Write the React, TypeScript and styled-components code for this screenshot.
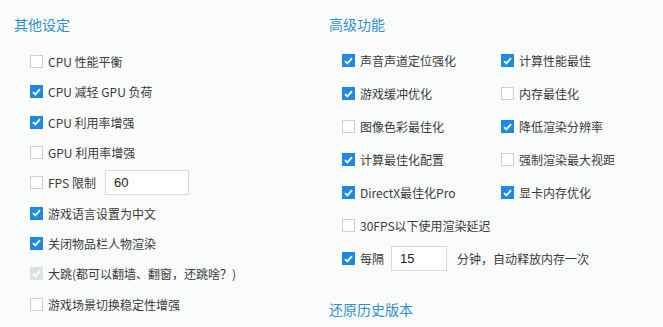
import styled, { createGlobalStyle } from "styled-components";

const GlobalStyle = createGlobalStyle`
  html, body {
    margin: 0;
    padding: 0;
    background: #fafcfc;
  }
  body {
    font-family: "Microsoft YaHei", "Noto Sans CJK SC", "Noto Sans", sans-serif;
    color: #3a3a3a;
  }
`;

const Page = styled.div`
  width: 663px;
  height: 327px;
  display: grid;
  grid-template-columns: 315px 1fr;
  padding-left: 14px;
  box-sizing: border-box;
  overflow: hidden;
`;

const Section = styled.div`
  display: flex;
  flex-direction: column;
`;

const Title = styled.div`
  margin-top: 14px;
  font-size: 14px;
  line-height: 20px;
  color: #2f8fce;
`;

const LeftList = styled.div`
  margin-top: 12.5px;
  padding-left: 16px;
  display: grid;
  grid-auto-rows: 30.3px;
`;

const RightList = styled.div`
  margin-top: 10px;
  padding-left: 13px;
  display: grid;
  grid-template-columns: 159px 1fr;
  grid-auto-rows: 33px;
`;

const Row = styled.label<{ $wide?: boolean }>`
  display: flex;
  align-items: center;
  font-size: 12px;
  white-space: nowrap;
  grid-column: ${(p) => (p.$wide ? "1 / -1" : "auto")};
`;

const Box = styled.span<{ $checked?: boolean; $disabled?: boolean }>`
  width: 13px;
  height: 13px;
  box-sizing: border-box;
  margin-right: 5px;
  flex-shrink: 0;
  display: flex;
  align-items: center;
  justify-content: center;
  border: 1px solid
    ${(p) => (p.$disabled ? "#dde1e5" : p.$checked ? "#1e88e5" : "#cfcfcf")};
  background: ${(p) =>
    p.$disabled ? "#dde1e5" : p.$checked ? "#1e88e5" : "#ffffff"};
`;

const Input = styled.div<{ $w: number }>`
  width: ${(p) => p.$w}px;
  height: 25px;
  box-sizing: border-box;
  border: 1px solid #d8d8d8;
  background: #fff;
  display: flex;
  align-items: center;
  padding-left: 8px;
  font-family: "Liberation Sans", "Noto Sans CJK SC", sans-serif;
  font-size: 13px;
  color: #222;
`;

const Link = styled.div`
  margin-top: 24px;
  font-size: 14px;
  line-height: 20px;
  color: #2f8fce;
`;

const Check = ({ checked, disabled }: { checked?: boolean; disabled?: boolean }) => (
  <Box $checked={checked} $disabled={disabled}>
    {(checked || disabled) && (
      <svg width="9" height="8" viewBox="0 0 9 8">
        <path d="M1 4.2 L3.4 6.4 L8 1.2" fill="none" stroke="#fff" strokeWidth="1.8" />
      </svg>
    )}
  </Box>
);

const leftItems = [
  { text: "CPU 性能平衡", checked: false },
  { text: "CPU 减轻 GPU 负荷", checked: true },
  { text: "CPU 利用率增强", checked: true },
  { text: "GPU 利用率增强", checked: false },
];

const leftItems2 = [
  { text: "游戏语言设置为中文", checked: true },
  { text: "关闭物品栏人物渲染", checked: true },
  { text: "大跳(都可以翻墙、翻窗，还跳啥？)", checked: true, disabled: true },
  { text: "游戏场景切换稳定性增强", checked: false },
];

const rightItems = [
  { text: "声音声道定位强化", checked: true },
  { text: "计算性能最佳", checked: true },
  { text: "游戏缓冲优化", checked: true },
  { text: "内存最佳化", checked: false },
  { text: "图像色彩最佳化", checked: false },
  { text: "降低渲染分辨率", checked: true },
  { text: "计算最佳化配置", checked: true },
  { text: "强制渲染最大视距", checked: false },
  { text: "DirectX最佳化Pro", checked: true },
  { text: "显卡内存优化", checked: true },
];

export default function App() {
  return (
    <>
      <GlobalStyle />
      <Page>
        <Section>
          <Title>其他设定</Title>
          <LeftList>
            {leftItems.map((it) => (
              <Row key={it.text}>
                <Check checked={it.checked} />
                {it.text}
              </Row>
            ))}
            <Row>
              <Check />
              FPS 限制
              <span style={{ width: 9 }} />
              <Input $w={84}>60</Input>
            </Row>
            {leftItems2.map((it) => (
              <Row key={it.text}>
                <Check checked={it.checked} disabled={it.disabled} />
                {it.text}
              </Row>
            ))}
          </LeftList>
        </Section>
        <Section>
          <Title>高级功能</Title>
          <RightList>
            {rightItems.map((it) => (
              <Row key={it.text}>
                <Check checked={it.checked} />
                {it.text}
              </Row>
            ))}
            <Row $wide>
              <Check />
              30FPS以下使用渲染延迟
            </Row>
            <Row $wide>
              <Check checked />
              每隔
              <span style={{ width: 7 }} />
              <Input $w={56}>15</Input>
              <span style={{ width: 10 }} />
              分钟，自动释放内存一次
            </Row>
          </RightList>
          <Link>还原历史版本</Link>
        </Section>
      </Page>
    </>
  );
}
